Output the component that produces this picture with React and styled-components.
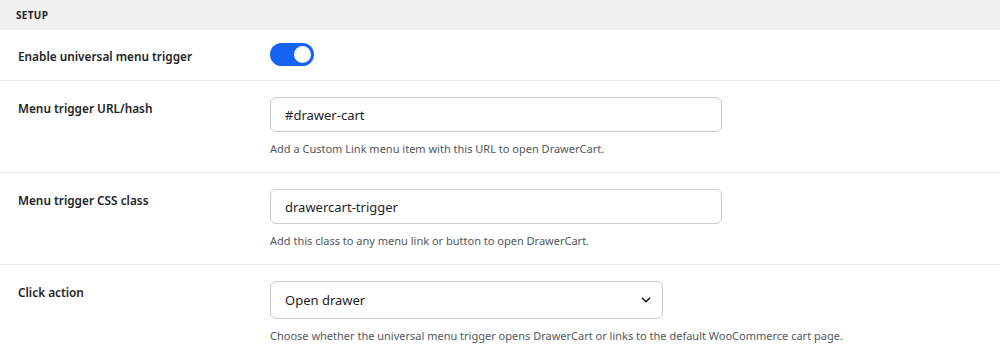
import { useState } from "react";
import { styled, createGlobalStyle } from "styled-components";

const GlobalStyle = createGlobalStyle`
    * { box-sizing: border-box; }
    body {
        margin: 0;
        background: #ffffff;
        font-family: "Noto Sans", "Open Sans", Arial, sans-serif;
        color: #1d2327;
    }
`;

export default function App() {
    const [enabled, setEnabled] = useState(true);
    const [url, setUrl] = useState("#drawer-cart");
    const [cls, setCls] = useState("drawercart-trigger");
    const [action, setAction] = useState("drawer");

    return (
        <Page>
            <GlobalStyle />
            <SectionHeader>Setup</SectionHeader>
            <Row $compact>
                <Label>Enable universal menu trigger</Label>
                <Control>
                    <Toggle
                        type="button"
                        $on={enabled}
                        onClick={() => setEnabled(!enabled)}
                        aria-pressed={enabled}
                    />
                </Control>
            </Row>
            <Row>
                <Label>Menu trigger URL/hash</Label>
                <Control>
                    <TextInput
                        value={url}
                        onChange={(e) => setUrl(e.target.value)}
                    />
                    <Help>
                        Add a Custom Link menu item with this URL to open
                        DrawerCart.
                    </Help>
                </Control>
            </Row>
            <Row>
                <Label>Menu trigger CSS class</Label>
                <Control>
                    <TextInput
                        value={cls}
                        onChange={(e) => setCls(e.target.value)}
                    />
                    <Help>
                        Add this class to any menu link or button to open
                        DrawerCart.
                    </Help>
                </Control>
            </Row>
            <Row $last>
                <Label>Click action</Label>
                <Control>
                    <SelectWrap>
                        <Select
                            value={action}
                            onChange={(e) => setAction(e.target.value)}>
                            <option value="drawer">Open drawer</option>
                            <option value="cart">Go to cart page</option>
                        </Select>
                        <Chevron viewBox="0 0 16 16">
                            <path
                                d="M4 6l4 4 4-4"
                                fill="none"
                                stroke="#1d2327"
                                strokeWidth="2"
                                strokeLinecap="round"
                                strokeLinejoin="round"
                            />
                        </Chevron>
                    </SelectWrap>
                    <Help>
                        Choose whether the universal menu trigger opens
                        DrawerCart or links to the default WooCommerce cart
                        page.
                    </Help>
                </Control>
            </Row>
        </Page>
    );
}

const Page = styled.div`
    width: 1000px;
    height: 360px;
    overflow: hidden;
    background: #ffffff;
`;

const SectionHeader = styled.div`
    height: 30px;
    display: flex;
    align-items: center;
    padding: 0 16px;
    background: #f0f0f1;
    font-size: 10px;
    font-weight: 700;
    letter-spacing: 0.3px;
    text-transform: uppercase;
    color: #1d2327;
`;

const Row = styled.div`
    display: grid;
    grid-template-columns: 270px 1fr;
    align-items: ${(p) => (p.$compact ? "center" : "start")};
    height: ${(p) => (p.$compact ? "51px" : "92px")};
    padding: ${(p) => (p.$compact ? "0" : "16px 0 0")};
    border-bottom: ${(p) => (p.$last ? "none" : "1px solid #e8e8ea")};
`;

const Label = styled.div`
    padding-left: 18px;
    margin-top: 2px;
    font-size: 11.8px;
    font-weight: 600;
    line-height: 18px;
    color: #1d2327;
`;

const Control = styled.div`
    display: flex;
    flex-direction: column;
    align-items: flex-start;
`;

const Toggle = styled.button`
    position: relative;
    width: 44px;
    height: 23px;
    border: none;
    border-radius: 12px;
    padding: 0;
    background: ${(p) => (p.$on ? "#1463f3" : "#c3c4c7")};
    cursor: pointer;
    margin-top: -2px;

    &::after {
        content: "";
        position: absolute;
        top: 3px;
        left: ${(p) => (p.$on ? "24px" : "3px")};
        width: 17px;
        height: 17px;
        border-radius: 50%;
        background: #ffffff;
    }
`;

const TextInput = styled.input`
    width: 452px;
    height: 35px;
    padding: 0 14px;
    border: 1px solid #c9cbcf;
    border-radius: 6px;
    font-family: inherit;
    font-size: 13px;
    color: #1d2327;
    outline: none;
    background: #ffffff;
`;

const SelectWrap = styled.div`
    position: relative;
    width: 393px;
`;

const Select = styled.select`
    width: 100%;
    height: 38px;
    padding: 0 14px;
    border: 1px solid #c9cbcf;
    border-radius: 6px;
    font-family: inherit;
    font-size: 13px;
    color: #1d2327;
    background: #ffffff;
    appearance: none;
    outline: none;
`;

const Chevron = styled.svg`
    position: absolute;
    right: 10px;
    top: 12px;
    width: 14px;
    height: 14px;
    pointer-events: none;
`;

const Help = styled.div`
    margin-top: 9px;
    font-size: 11px;
    line-height: 16px;
    color: #50575e;
`;
